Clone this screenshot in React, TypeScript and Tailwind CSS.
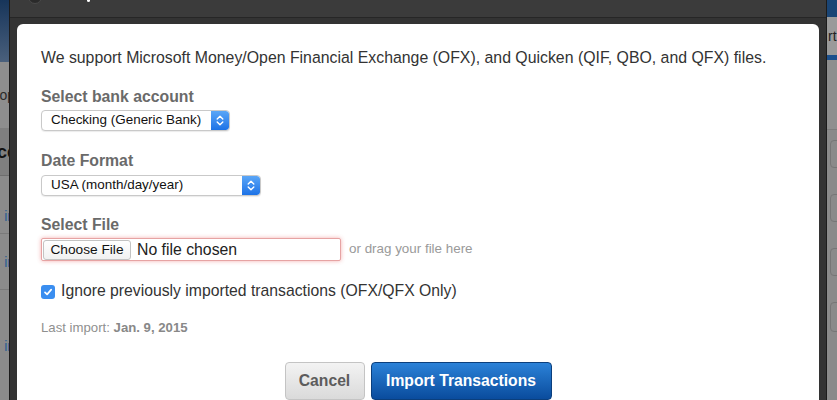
import React from "react";

function SelectBox({ label, width }: { label: string; width: string }) {
  return (
    <div
      className={`${width} h-[21px] flex items-stretch rounded-[4px] border border-[#c9c9c9] bg-white shadow-[0_1px_1px_rgba(0,0,0,0.08)] overflow-hidden`}
    >
      <div className="flex-1 flex items-center pl-[9px] text-[13.45px] text-[#111]">{label}</div>
      <div className="w-[18px] flex items-center justify-center bg-gradient-to-b from-[#5aa6f7] to-[#1c72e6] rounded-r-[3px]">
        <svg width="8" height="13" viewBox="0 0 8 13" fill="none">
          <path d="M1.2 5 L4 2.2 L6.8 5" stroke="white" strokeWidth="1.4" strokeLinecap="round" strokeLinejoin="round" />
          <path d="M1.2 8 L4 10.8 L6.8 8" stroke="white" strokeWidth="1.4" strokeLinecap="round" strokeLinejoin="round" />
        </svg>
      </div>
    </div>
  );
}

function LeftStrip() {
  return (
    <div className="w-[9px] h-full flex flex-col bg-[#8b8b8b] overflow-hidden text-[14px] leading-none">
      <div className="h-[62px] shrink-0 bg-gradient-to-b from-[#17355a] to-[#4a607c]" />
      <div className="h-[66px] shrink-0 bg-[#8e8e8e] flex items-center justify-end">
        <span className="text-[#2a2a2a] -mr-[6px]">op</span>
      </div>
      <div className="h-[48px] shrink-0 bg-[#7f7f7f] border-b border-[#6e6e6e] flex items-center justify-end">
        <span className="font-bold text-[#111] text-[18px] -mr-[8px]">cc</span>
      </div>
      <div className="flex flex-col items-end">
        <span className="mt-[33px] text-[#2c5d92] -mr-[3px]">ir</span>
        <div className="mt-[10px] w-full border-b border-[#7a7a7a]" />
        <span className="mt-[21px] text-[#2c5d92] -mr-[3px]">ir</span>
        <div className="mt-[20px] w-full border-b border-[#7a7a7a]" />
        <span className="mt-[49px] text-[#2c5d92] -mr-[3px]">ir</span>
      </div>
    </div>
  );
}

function RightStrip() {
  return (
    <div className="w-[10px] h-full flex flex-col bg-[#8a8a8a] overflow-hidden text-[14px] leading-none">
      <div className="h-[17px] shrink-0 bg-[#1a4575]" />
      <div className="h-[38px] shrink-0 bg-[#9a9a9a] flex items-center">
        <span className="text-[#222] pl-[1px]">rt</span>
      </div>
      <div className="h-[5px] shrink-0 bg-[#1b4f8c]" />
      <div className="h-[70px] shrink-0 bg-[#8f8f8f] border-b border-[#7d7d7d]" />
      <div className="flex flex-col gap-[26px] pt-[10px] pl-[3px]">
        <div className="h-[28px] w-[14px] rounded-[4px] border border-[#767676]" />
        <div className="h-[28px] w-[14px] rounded-[4px] border border-[#767676]" />
        <div className="h-[28px] w-[14px] rounded-[4px] border border-[#767676]" />
        <div className="h-[30px] w-[14px] rounded-[4px] border border-[#767676]" />
      </div>
    </div>
  );
}

export default function App() {
  return (
    <div
      className="w-[837px] h-[400px] flex overflow-hidden bg-[#8b8b8b]"
      style={{ fontFamily: '"Liberation Sans", Arial, Helvetica, sans-serif' }}
    >
      <LeftStrip />
      <div className="w-[818px] h-full flex flex-col bg-[#333333] border-x border-[#1c1c1c] relative">
        <div className="h-[18px] bg-[#3b3b3b] border-b border-[#262626] shrink-0" />
        <div className="absolute left-[18px] top-[-10px] w-[14px] h-[14px] rounded-full bg-[#2a2a2a] border border-[#4a4a4a]" />
        <div className="absolute left-[77px] top-[-2px] w-[3px] h-[4px] bg-white rounded-full" />
        <div className="h-[6px] shrink-0" />
        <div className="flex-1 mx-[7px] bg-white rounded-t-[6px] px-[24px] text-[#333]">
          <p className="mt-[24px] text-[15.85px] leading-[20px] text-[#333] whitespace-nowrap">
            We support Microsoft Money/Open Financial Exchange (OFX), and Quicken (QIF, QBO, and QFX) files.
          </p>
          <div className="mt-[19px] text-[15.8px] leading-[20px] font-bold text-[#6a6a6a]">Select bank account</div>
          <div className="mt-[3px]">
            <SelectBox label="Checking (Generic Bank)" width="w-[189px]" />
          </div>
          <div className="mt-[20px] text-[15.8px] leading-[20px] font-bold text-[#6a6a6a]">Date Format</div>
          <div className="mt-[4px]">
            <SelectBox label="USA (month/day/year)" width="w-[220px]" />
          </div>
          <div className="mt-[19px] text-[15.8px] leading-[20px] font-bold text-[#6a6a6a]">Select File</div>
          <div className="mt-[3px] flex items-center gap-[8px]">
            <div className="w-[300px] h-[23px] flex items-center border border-[#e6a3a3] rounded-[2px] shadow-[0_0_4px_rgba(230,80,80,0.45)] bg-white pl-[1px]">
              <div className="h-[20px] w-[88px] flex items-center justify-center rounded-[3px] border border-[#c3c3c3] bg-gradient-to-b from-white to-[#f1f1f1] text-[13.7px] text-[#111] pt-[2px]">
                Choose File
              </div>
              <span className="ml-[6px] text-[15.8px] text-[#222]">No file chosen</span>
            </div>
            <span className="text-[13.4px] text-[#9a9a9a]">or drag your file here</span>
          </div>
          <div className="mt-[20px] h-[20px] flex items-center gap-[6px]">
            <div className="w-[14px] h-[14px] mt-[2px] rounded-[3px] bg-[#3a8ef0] flex items-center justify-center">
              <svg width="10" height="10" viewBox="0 0 10 10" fill="none">
                <path d="M2 5.3 L4.1 7.4 L8.2 2.6" stroke="white" strokeWidth="1.7" strokeLinecap="round" strokeLinejoin="round" />
              </svg>
            </div>
            <span className="text-[15.75px] text-[#333]">Ignore previously imported transactions (OFX/QFX Only)</span>
          </div>
          <div className="mt-[19px] text-[13.2px] leading-[16px] text-[#8f8f8f]">
            Last import: <span className="font-bold text-[#888]">Jan. 9, 2015</span>
          </div>
          <div className="mt-[26px] flex justify-center gap-[6px]">
            <div className="w-[80px] h-[38px] flex items-center justify-center rounded-[4px] border border-[#c4c4c4] bg-gradient-to-b from-[#f3f3f3] to-[#dadada] text-[15.7px] font-bold text-[#5c5c5c]">
              Cancel
            </div>
            <div className="w-[181px] h-[38px] flex items-center justify-center rounded-[4px] border border-[#0b3f7d] bg-gradient-to-b from-[#2b82d8] to-[#0a4c9d] text-[15.7px] font-bold text-white">
              Import Transactions
            </div>
          </div>
        </div>
      </div>
      <RightStrip />
    </div>
  );
}
